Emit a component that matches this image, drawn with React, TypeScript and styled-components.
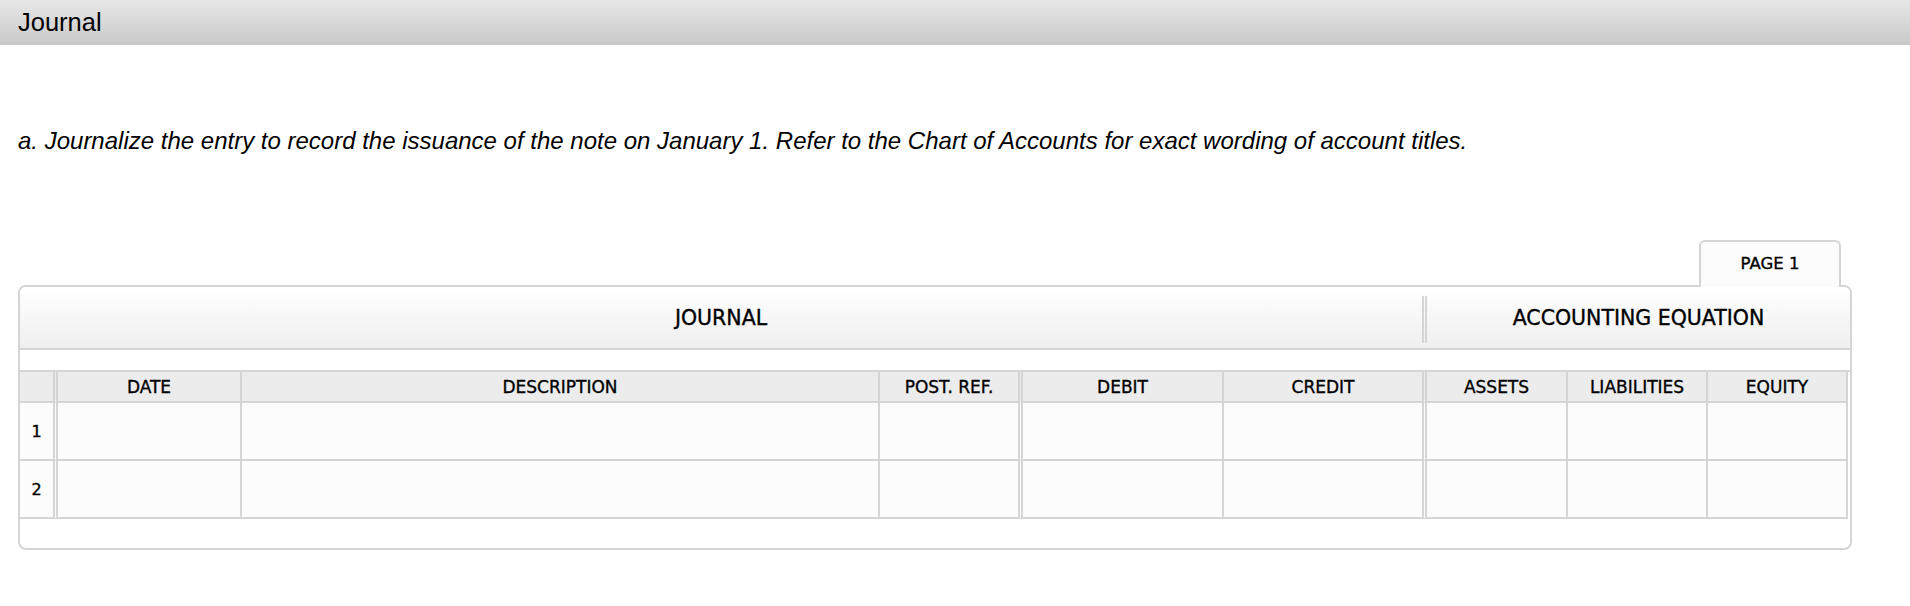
import styled, { createGlobalStyle, css } from "styled-components";

const GlobalStyle = createGlobalStyle`
  html, body {
    margin: 0;
    padding: 0;
    background: #ffffff;
  }
  * {
    box-sizing: border-box;
  }
`;

type Edge = "single" | "double" | "none";

const columns = [
  { key: "num", label: "", width: 38, edge: "double" as Edge },
  { key: "date", label: "DATE", width: 184, edge: "single" as Edge },
  { key: "desc", label: "DESCRIPTION", width: 638, edge: "single" as Edge },
  { key: "ref", label: "POST. REF.", width: 143, edge: "double" as Edge },
  { key: "debit", label: "DEBIT", width: 201, edge: "single" as Edge },
  { key: "credit", label: "CREDIT", width: 203, edge: "double" as Edge },
  { key: "assets", label: "ASSETS", width: 141, edge: "single" as Edge },
  { key: "liab", label: "LIABILITIES", width: 140, edge: "single" as Edge },
  { key: "equity", label: "EQUITY", width: 140, edge: "single" as Edge },
];

const rows = [1, 2];

const App = () => {
  return (
    <>
      <GlobalStyle />
      <TitleBar>Journal</TitleBar>
      <Content>
        <Instruction>
          a. Journalize the entry to record the issuance of the note on January
          1. Refer to the Chart of Accounts for exact wording of account titles.
        </Instruction>
        <TabRow>
          <PageTab>PAGE 1</PageTab>
        </TabRow>
        <Panel>
          <SectionHead>
            <SectionTitle $width={1402}>JOURNAL</SectionTitle>
            <SectionDivider />
            <SectionTitle>ACCOUNTING EQUATION</SectionTitle>
          </SectionHead>
          <Spacer $height={20} />
          <Grid>
            {columns.map((c) => (
              <HeadCell key={c.key} $edge={c.edge}>
                {c.label}
              </HeadCell>
            ))}
            {rows.map((r) =>
              columns.map((c) => (
                <BodyCell key={`${r}-${c.key}`} $edge={c.edge}>
                  {c.key === "num" ? r : null}
                </BodyCell>
              ))
            )}
          </Grid>
          <Spacer $height={29} />
        </Panel>
      </Content>
    </>
  );
};

const tableFont = css`
  font-family: "DejaVu Sans", Verdana, sans-serif;
  color: #000;
  -webkit-text-stroke: 0.35px #000;
`;

const TitleBar = styled.div`
  height: 45px;
  padding-left: 18px;
  display: flex;
  align-items: center;
  background: linear-gradient(to bottom, #e8e8e8, #c8c8c8);
  font-family: "Liberation Sans", Arial, sans-serif;
  font-size: 25.5px;
  color: #000;
`;

const Content = styled.div`
  padding: 0 18px;
`;

const Instruction = styled.p`
  margin: 82px 0 85px;
  line-height: 28px;
  font-family: "Liberation Sans", Arial, sans-serif;
  font-style: italic;
  font-size: 24px;
  color: #000;
`;

const TabRow = styled.div`
  display: flex;
  justify-content: flex-end;
  padding-right: 11px;
  width: 1834px;
`;

const PageTab = styled.div`
  position: relative;
  z-index: 1;
  width: 142px;
  height: 47px;
  margin-bottom: -2px;
  display: flex;
  align-items: center;
  justify-content: center;
  padding-bottom: 2px;
  background: #fcfcfc;
  border: 2px solid #d5d5d5;
  border-bottom: none;
  border-radius: 6px 6px 0 0;
  ${tableFont}
  font-size: 16.5px;
`;

const Panel = styled.div`
  width: 1834px;
  border: 2px solid #d5d5d5;
  border-radius: 8px;
  background: #ffffff;
  overflow: hidden;
`;

const SectionHead = styled.div`
  display: flex;
  height: 63px;
  border-bottom: 2px solid #d5d5d5;
  background: linear-gradient(to bottom, #ffffff, #efefef);
`;

const SectionTitle = styled.div<{ $width?: number }>`
  ${({ $width }) =>
    $width
      ? css`
          flex: 0 0 ${$width}px;
        `
      : css`
          flex: 1;
        `}
  display: flex;
  align-items: center;
  justify-content: center;
  ${tableFont}
  font-size: 20.5px;
`;

const SectionDivider = styled.div`
  flex: 0 0 5px;
  margin: 9px 0 5px;
  border-left: 5px double #d5d5d5;
`;

const Spacer = styled.div<{ $height: number }>`
  height: ${({ $height }) => $height}px;
`;

const Grid = styled.div`
  display: grid;
  grid-template-columns: ${columns.map((c) => `${c.width}px`).join(" ")};
  grid-template-rows: 31px 58px 58px;
  border-top: 2px solid #d5d5d5;
`;

const edgeStyle = (edge: Edge) =>
  edge === "double"
    ? css`
        border-right: 5px double #d5d5d5;
      `
    : edge === "single"
    ? css`
        border-right: 2px solid #d5d5d5;
      `
    : css``;

const HeadCell = styled.div<{ $edge: Edge }>`
  display: flex;
  align-items: center;
  justify-content: center;
  background: #ececec;
  border-bottom: 2px solid #d5d5d5;
  ${({ $edge }) => edgeStyle($edge)}
  ${tableFont}
  font-size: 17px;
`;

const BodyCell = styled.div<{ $edge: Edge }>`
  display: flex;
  align-items: center;
  justify-content: center;
  background: #fcfcfc;
  border-bottom: 2px solid #d5d5d5;
  ${({ $edge }) => edgeStyle($edge)}
  ${tableFont}
  font-size: 16px;
`;

export default App;
